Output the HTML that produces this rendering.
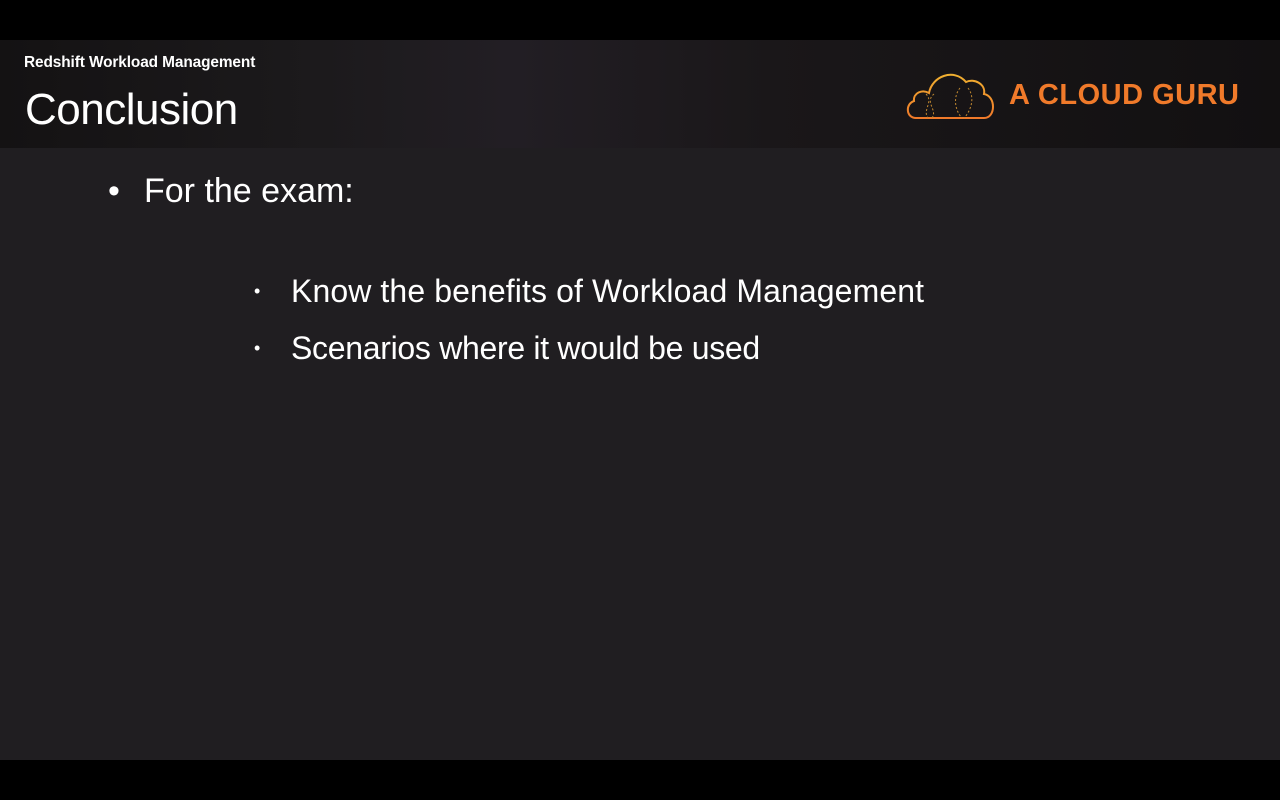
<!DOCTYPE html>
<html><head><style>
html,body{margin:0;padding:0;width:1280px;height:800px;background:#000;overflow:hidden;font-family:"Liberation Sans",sans-serif;}
.hdr{position:absolute;left:0;top:40px;width:1280px;height:108px;background:linear-gradient(90deg,#141213 0%,#1c1a1c 25%,#221e24 40%,#1a1719 60%,#121011 100%);}
.main{position:absolute;left:0;top:148px;width:1280px;height:612px;background:#201e21;}
.sub{position:absolute;left:24px;top:54px;color:#fff;font-size:15.4px;font-weight:bold;letter-spacing:-0.1px}
.title{position:absolute;left:25px;top:85px;color:#fff;font-size:44px;letter-spacing:-0.5px}
.logo{position:absolute;left:1009px;top:79px;color:#f07a2a;font-size:29px;font-weight:bold;letter-spacing:0.5px}
.t{position:absolute;color:#fff;white-space:nowrap}
</style></head><body>
<div class="hdr"></div>
<div class="main"></div>
<div class="sub">Redshift Workload Management</div>
<div class="title">Conclusion</div>
<svg style="position:absolute;left:904px;top:68px" width="94" height="54" viewBox="0 0 94 54">
<defs><linearGradient id="g" x1="0" y1="0" x2="0" y2="1"><stop offset="0" stop-color="#f0b030"/><stop offset="1" stop-color="#f07a2a"/></linearGradient></defs>
<path d="M12 50 C2 50 1 36 10 33 C9 25 18 21 25 25 C28 8 50 0 62 14 C70 10 82 16 80 26 C92 28 92 50 80 50 Z" fill="none" stroke="url(#g)" stroke-width="2"/>
<path d="M22 26 C30 34 18 42 24 50 M30 26 C20 34 34 42 28 50 M56 20 C48 30 52 44 58 50 M64 20 C72 30 66 44 60 50" fill="none" stroke="#c48a30" stroke-width="1" stroke-dasharray="2 2"/>
</svg>
<div class="logo">A CLOUD GURU</div>
<div class="t" style="left:108px;top:172px;font-size:34px">•</div>
<div class="t" style="left:144px;top:172px;font-size:34px">For the exam:</div>
<div class="t" style="left:254px;top:281px;font-size:18px">•</div>
<div class="t" style="left:291px;top:273px;font-size:32px;letter-spacing:0.1px">Know the benefits of Workload Management</div>
<div class="t" style="left:254px;top:338px;font-size:18px">•</div>
<div class="t" style="left:291px;top:330px;font-size:32px;letter-spacing:-0.3px">Scenarios where it would be used</div>
</body></html>
